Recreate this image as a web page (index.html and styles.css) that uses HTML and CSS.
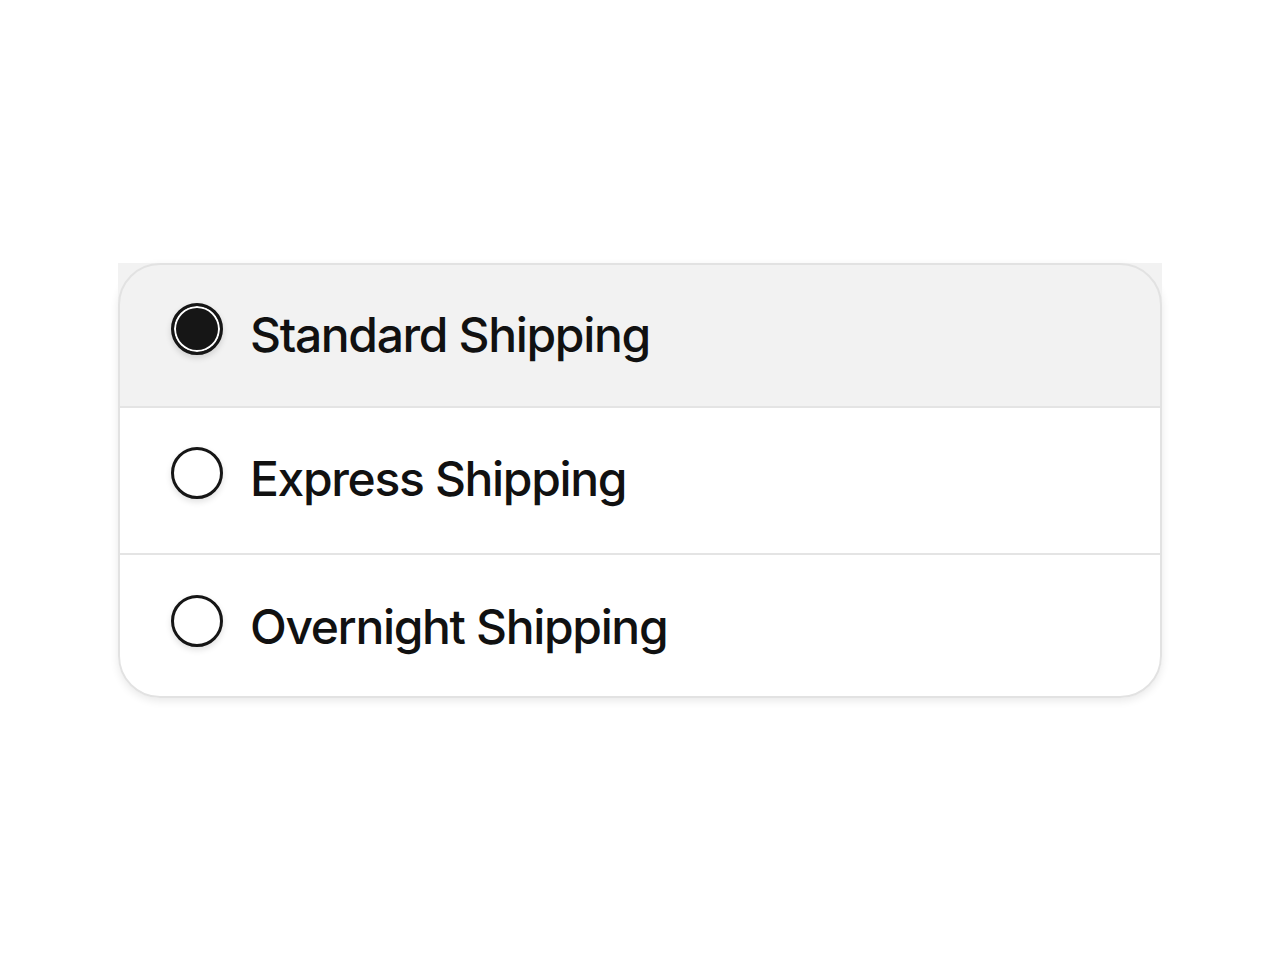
FILE: index.html
```html
<!DOCTYPE html>
<html lang="en">
<head>
<meta charset="utf-8">
<title>Shipping options</title>
<link rel="stylesheet" href="styles.css">
</head>
<body>
<main class="page">
  <div class="card" role="radiogroup" aria-label="Shipping method">
    <label class="option option-first option-selected">
      <span class="radio radio-checked"></span>
      <span class="label">Standard Shipping</span>
    </label>
    <label class="option option-middle">
      <span class="radio"></span>
      <span class="label">Express Shipping</span>
    </label>
    <label class="option option-last">
      <span class="radio"></span>
      <span class="label">Overnight Shipping</span>
    </label>
  </div>
</main>
</body>
</html>
```
FILE: styles.css
```css
html, body {
  margin: 0;
  padding: 0;
  background: #ffffff;
}

body {
  font-family: Inter, "Noto Sans", "Liberation Sans", sans-serif;
  color: #111111;
}

.page {
  height: 960px;
  display: flex;
  align-items: center;
  justify-content: center;
}

.card {
  position: relative;
  width: 1044px;
  display: flex;
  flex-direction: column;
  background: #ffffff;
  border-radius: 42px;
  box-shadow: 0 3px 8px rgba(0, 0, 0, 0.09);
}

.card::after {
  content: "";
  position: absolute;
  inset: 0;
  border: 2px solid #e2e2e2;
  border-radius: 42px;
  pointer-events: none;
}

.option {
  display: flex;
  align-items: flex-start;
  gap: 27px;
  box-sizing: border-box;
  padding: 40px 0 0 53px;
  cursor: pointer;
}

.option-first {
  height: 143px;
}

.option-middle {
  height: 147px;
  border-top: 2px solid #e4e4e4;
  padding-top: 39px;
}

.option-last {
  height: 145px;
  border-top: 2px solid #e4e4e4;
  padding-top: 40px;
  border-radius: 0 0 42px 42px;
}

.option-selected {
  background: #f2f2f2;
}

.radio {
  flex: none;
  width: 52px;
  height: 52px;
  box-sizing: border-box;
  border: 3px solid #161616;
  border-radius: 50%;
  background: #ffffff;
  box-shadow: 0 3px 6px rgba(0, 0, 0, 0.12);
}

.radio-checked {
  background: #161616;
  box-shadow: inset 0 0 0 2px #ffffff, 0 3px 6px rgba(0, 0, 0, 0.14);
}

.label {
  font-size: 48px;
  font-weight: 500;
  line-height: 58px;
  margin-top: 3px;
  letter-spacing: -1.35px;
}
```
